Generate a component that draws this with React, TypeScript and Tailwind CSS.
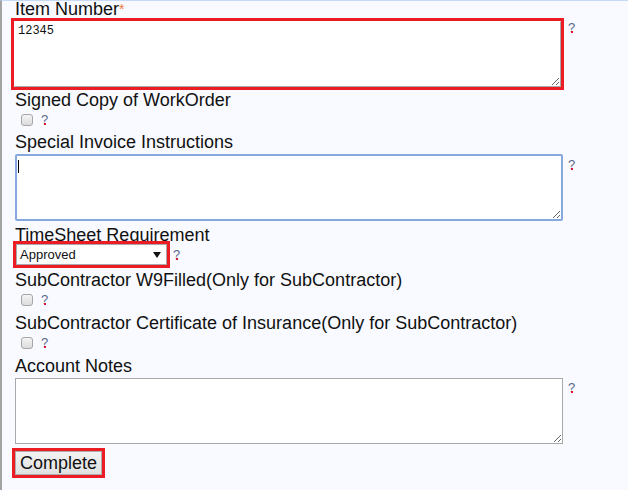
import React from 'react';

const Help = ({ className = '' }: { className?: string }) => (
  <span className={`relative block text-[13px] leading-[13px] text-[#5b6a8a] ${className}`}>
    ?
    <span className="absolute left-[3px] bottom-[1px] w-[2px] h-[2px] bg-[#d4143c]" />
  </span>
);

const CheckBox = ({ className = '' }: { className?: string }) => (
  <span className={`block w-[12px] h-[12px] rounded-[3px] border border-[#a6a6a6] bg-gradient-to-b from-[#f4f4f4] to-[#dcdcdc] ${className}`} />
);

const Label = ({ children }: { children: React.ReactNode }) => (
  <div className="h-[20px] leading-[20px] whitespace-nowrap">{children}</div>
);

const CheckRow = ({ h }: { h: string }) => (
  <div className={`flex items-start ${h}`}>
    <CheckBox className="mt-[4px] ml-[6px]" />
    <Help className="ml-[8px] mt-[3px]" />
  </div>
);

export default function App() {
  return (
    <div className="w-[628px] h-[490px] overflow-hidden bg-[#f8faff] border-l-2 border-l-[#a3a3a3] border-t border-t-[#c6d9f6] font-['Liberation_Sans',Arial,sans-serif] text-[18px] text-[#111]">
      <div className="pl-[13px] -mt-[2px]">
        <Label>
          Item Number<span className="text-[#ef7a3a] text-[14px] align-top">*</span>
        </Label>
        <div className="flex items-start -mt-[1px]">
          <div className="-ml-[4px] border-[3px] border-[#ec1c24] h-[72px] w-[553px] bg-white">
            <textarea
              defaultValue="12345"
              className="block w-full h-full border border-[#a9a9a9] border-t-white border-l-white bg-white pl-[3px] pt-[2px] font-['Liberation_Mono',monospace] text-[12px] leading-[14px] text-[#111] outline-none resize"
            />
          </div>
          <Help className="ml-[4px] mt-[3px]" />
        </div>

        <Label>Signed Copy of WorkOrder</Label>
        <CheckRow h="h-[22px]" />

        <Label>Special Invoice Instructions</Label>
        <div className="flex items-start mt-[2px]">
          <div className="relative">
            <textarea className="block w-[548px] h-[67px] border-2 border-[#86a8de] rounded-[2px] bg-white outline-none" />
            <span className="absolute left-[3px] top-[6px] w-[1px] h-[13px] bg-black" />
          </div>
          <Help className="ml-[5px] mt-[4px]" />
        </div>

        <div className="mt-[4px]">
          <Label>TimeSheet Requirement</Label>
        </div>
        <div className="flex items-start -mt-[4px]">
          <div className="-ml-[2px] w-[157px] h-[27px] border-[3px] border-[#ec1c24]">
            <div className="flex items-center justify-between h-full border border-[#a9a9a9] bg-white pl-[3px] pr-[5px] text-[13px] leading-[13px]">
              <span>Approved</span>
              <svg width="8" height="6" viewBox="0 0 8 6">
                <path d="M0 0 L8 0 L4 6 Z" fill="#111" />
              </svg>
            </div>
          </div>
          <Help className="ml-[3px] mt-[7px]" />
        </div>

        <div className="mt-[2px]">
          <Label>SubContractor W9Filled(Only for SubContractor)</Label>
        </div>
        <CheckRow h="h-[23px]" />

        <Label>SubContractor Certificate of Insurance(Only for SubContractor)</Label>
        <CheckRow h="h-[23px]" />

        <Label>Account Notes</Label>
        <div className="flex items-start mt-[2px]">
          <textarea className="block w-[548px] h-[66px] border border-[#a9a9a9] bg-white outline-none" />
          <Help className="ml-[5px] mt-[3px]" />
        </div>

        <div className="-ml-[3px] mt-[4px] w-[93px] h-[30px] border-[3px] border-[#ec1c24]">
          <button className="block w-full h-full border border-[#adadad] bg-gradient-to-b from-[#f2f2f2] to-[#e1e1e1] text-[18px] leading-[20px] text-[#111]">
            Complete
          </button>
        </div>
      </div>
    </div>
  );
}
